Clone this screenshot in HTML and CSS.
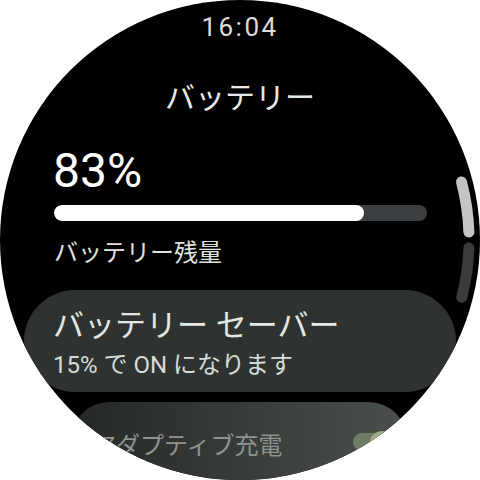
FILE: index.html
```html
<!DOCTYPE html>
<html lang="ja">
<head>
<meta charset="utf-8">
<link rel="stylesheet" href="styles.css">
</head>
<body>
<div class="watch">
  <div class="time">16:04</div>
  <div class="title">バッテリー</div>
  <div class="percent">83%</div>
  <div class="bar"><div class="bar-fill" style="width: 83%"></div></div>
  <div class="label">バッテリー残量</div>
  <div class="chip">
    <div class="chip-title">バッテリー セーバー</div>
    <div class="chip-sub">15% で ON になります</div>
  </div>
  <div class="chip2">
    <div class="chip2-text">アダプティブ充電</div>
    <div class="toggle"><div class="thumb"></div></div>
  </div>
  <svg class="scroll" width="480" height="480" viewBox="0 0 480 480">
    <path d="M461.5 181.9 A229 229 0 0 1 468.9 232" class="sb-thumb"/>
    <path d="M468.9 248 A229 229 0 0 1 461.7 297.3" class="sb-track"/>
  </svg>
</div>
</body>
</html>
```
FILE: styles.css
```css
html, body {
  margin: 0;
  padding: 0;
  background: #ffffff;
}
body {
  font-family: Roboto, "Noto Sans CJK JP", sans-serif;
}
.watch {
  position: relative;
  width: 480px;
  height: 480px;
  border-radius: 50%;
  background: #000000;
  overflow: hidden;
}
.time {
  height: 55px;
  line-height: 55px;
  text-align: center;
  font-size: 26px;
  font-weight: 400;
  letter-spacing: 2.5px;
  color: #dcdcdc;
}
.title {
  height: 85px;
  line-height: 85px;
  text-align: center;
  font-size: 30px;
  color: #e6eae6;
}
.percent {
  margin-top: 6.6px;
  padding-left: 53px;
  height: 48px;
  line-height: 48px;
  font-size: 48px;
  color: #ffffff;
}
.bar {
  margin: 10.4px 0 0 54px;
  width: 373px;
  height: 16px;
  border-radius: 8px;
  background: #3c3f41;
  overflow: hidden;
}
.bar-fill {
  height: 100%;
  border-radius: 8px;
  background: #ffffff;
}
.label {
  margin-top: 19.8px;
  padding-left: 54px;
  height: 24px;
  line-height: 24px;
  font-size: 24px;
  color: #dfe3df;
}
.chip {
  box-sizing: border-box;
  margin: 25.2px 24px 0 24px;
  height: 102px;
  border-radius: 51px;
  background: #2e3331;
  padding: 20.3px 0 0 29px;
}
.chip-title {
  height: 31px;
  line-height: 31px;
  font-size: 31px;
  color: #e3e8e3;
}
.chip-sub {
  margin-top: 11.5px;
  height: 24px;
  line-height: 24px;
  font-size: 24px;
  color: #d6dcd6;
}
.chip2 {
  box-sizing: border-box;
  display: flex;
  align-items: flex-start;
  margin: 10px 72px 0 70px;
  height: 96px;
  border-radius: 40px;
  background: linear-gradient(to right, #242826, #4a504c);
  padding: 31.8px 11px 0 22px;
}
.chip2-text {
  height: 24px;
  line-height: 24px;
  font-size: 24px;
  color: #8e938f;
}
.toggle {
  position: relative;
  margin-left: auto;
  margin-top: -1px;
  width: 44px;
  height: 18px;
  border-radius: 9px;
  background: #6f7d66;
}
.thumb {
  position: absolute;
  left: 17px;
  top: -2px;
  width: 26px;
  height: 22px;
  border-radius: 50%;
  background: #9db07f;
}
.scroll {
  position: absolute;
  left: 0;
  top: 0;
  fill: none;
  stroke-width: 11;
  stroke-linecap: round;
}
.sb-thumb { stroke: #c4c4c4; }
.sb-track { stroke: #393c3a; }
```
